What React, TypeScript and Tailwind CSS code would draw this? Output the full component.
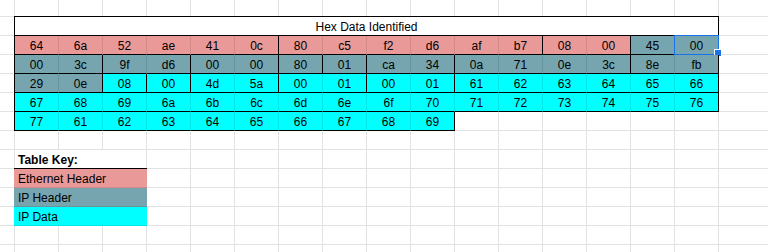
import React from "react";

type Kind = "E" | "I" | "D";

const BG: Record<Kind, string> = {
  E: "bg-[#ea9999]",
  I: "bg-[#76a5af]",
  D: "bg-[#00ffff]",
};

const rows: string[][] = [
  ["64", "6a", "52", "ae", "41", "0c", "80", "c5", "f2", "d6", "af", "b7", "08", "00", "45", "00"],
  ["00", "3c", "9f", "d6", "00", "00", "80", "01", "ca", "34", "0a", "71", "0e", "3c", "8e", "fb"],
  ["29", "0e", "08", "00", "4d", "5a", "00", "01", "00", "01", "61", "62", "63", "64", "65", "66"],
  ["67", "68", "69", "6a", "6b", "6c", "6d", "6e", "6f", "70", "71", "72", "73", "74", "75", "76"],
  ["77", "61", "62", "63", "64", "65", "66", "67", "68", "69"],
];

const kinds: Kind[][] = [
  [..."EEEEEEEEEEEEEEII"] as Kind[],
  [..."IIIIIIIIIIIIIIII"] as Kind[],
  [..."IIDDDDDDDDDDDDDD"] as Kind[],
  [..."DDDDDDDDDDDDDDDD"] as Kind[],
  [..."DDDDDDDDDD"] as Kind[],
];

// indexes of cells whose right edge is a black field boundary
const blackRight: number[][] = [
  [5, 11, 13, 15],
  [1, 3, 5, 6, 7, 9, 13, 15],
  [1, 2, 3, 5, 7, 9, 15],
  [15],
  [9],
];

function Cell({ value, kind, black, selected }: { value: string; kind: Kind; black: boolean; selected: boolean }) {
  return (
    <div
      className={`relative box-border h-[19px] border-r border-b border-b-black text-center leading-[20px] ${BG[kind]} ${
        black ? "border-r-black" : "border-r-black/10"
      }`}
    >
      {value}
      {selected && (
        <>
          <div className="pointer-events-none absolute -inset-px border border-[#1a73e8]" />
          <div className="pointer-events-none absolute left-[40px] top-[14px] h-[6px] w-[6px] bg-[#1a73e8] outline outline-1 outline-white" />
        </>
      )}
    </div>
  );
}

export default function App() {
  return (
    <div className="flex h-[252px] w-[768px] overflow-hidden bg-white font-['Liberation_Sans',Arial,sans-serif] text-[12px] text-black [background-image:linear-gradient(to_bottom,#e2e2e2_1px,transparent_1px)] [background-position:0_16px] [background-size:100%_19px]">
      <div className="w-[719px] shrink-0 pl-[14px] pt-[16px] [background-image:linear-gradient(to_right,#e2e2e2_1px,transparent_1px)] [background-position:14px_0] [background-size:44px_100%]">
        <div className="grid w-[705px] grid-cols-[repeat(16,44px)] auto-rows-[19px] border-l border-t border-black">
          <div className="col-span-16 box-border border-r border-b border-black bg-white text-center leading-[20px]">
            Hex Data Identified
          </div>
          {rows.map((row, r) =>
            row.map((v, c) => (
              <Cell
                key={`${r}-${c}`}
                value={v}
                kind={kinds[r][c]}
                black={blackRight[r].includes(c)}
                selected={r === 0 && c === 15}
              />
            ))
          )}
        </div>

        <div className="mt-[19px] w-[133px]">
          <div className="box-border h-[19px] border-b border-black px-px">
            <div className="h-full bg-white pl-[3px] font-bold leading-[20px]">Table Key:</div>
          </div>
          <div className="box-border h-[19px] border-b border-black/10 bg-[#ea9999] pl-[4px] leading-[20px]">
            Ethernet Header
          </div>
          <div className="box-border h-[19px] border-b border-black/10 bg-[#76a5af] pl-[4px] leading-[20px]">
            IP Header
          </div>
          <div className="box-border h-[19px] border-b border-black/10 bg-[#00ffff] pl-[4px] leading-[20px]">
            IP Data
          </div>
        </div>
      </div>
      <div className="flex-1" />
    </div>
  );
}
